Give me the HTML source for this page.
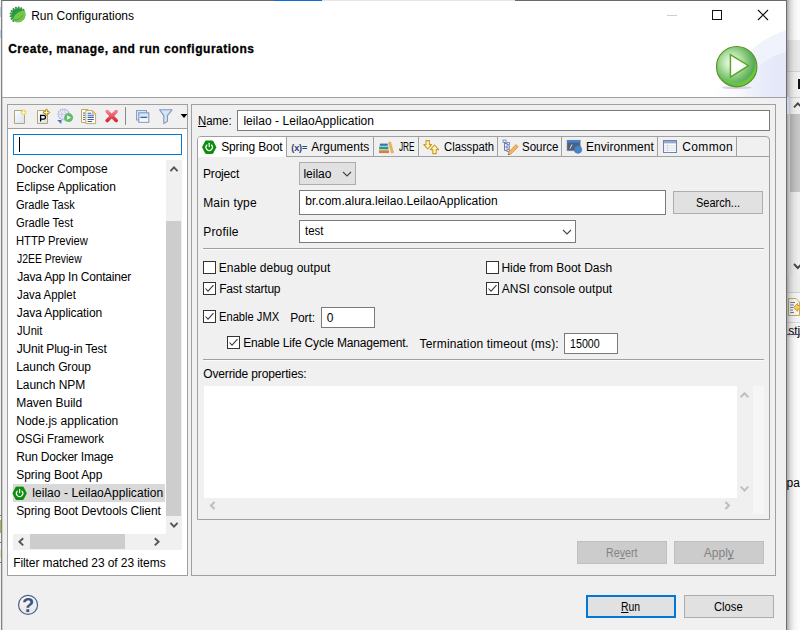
<!DOCTYPE html>
<html><head><meta charset="utf-8"><title>Run Configurations</title>
<style>
html,body{margin:0;padding:0}
body{width:800px;height:630px;overflow:hidden;position:relative;background:#f0f0f0;font-family:"Liberation Sans",sans-serif;font-size:12px;color:#000}
.a{position:absolute;box-sizing:border-box}
.t{position:absolute;white-space:nowrap;line-height:16px;height:16px;font-size:12px;transform-origin:0 0}
.t u{text-decoration:underline;text-underline-offset:1px;text-decoration-skip-ink:none}
.box{position:absolute;box-sizing:border-box;background:#fff;border:1px solid #7a7a7a}
.btn{position:absolute;box-sizing:border-box;background:#e1e1e1;border:1px solid #adadad}
.cb{position:absolute;box-sizing:border-box;width:13px;height:13px;background:#fff;border:1px solid #333}
svg{position:absolute;overflow:visible}
</style></head><body>
<!-- header white -->
<div class="a" id="hdr" style="left:2px;top:1px;width:785px;height:96px;background:#fff"></div>
<svg id="banner" style="left:0;top:0" width="800" height="98" viewBox="0 0 800 98"><defs>
<linearGradient id="gb1" gradientUnits="userSpaceOnUse" x1="712" y1="0" x2="764" y2="0"><stop offset="0" stop-color="#f0f2fc" stop-opacity="0"/><stop offset="1" stop-color="#f0f2fc"/></linearGradient>
<linearGradient id="gb2" gradientUnits="userSpaceOnUse" x1="738" y1="0" x2="776" y2="0"><stop offset="0" stop-color="#e4e8f9" stop-opacity="0"/><stop offset="1" stop-color="#e4e8f9"/></linearGradient>
</defs>
<path d="M787 30 C 762 37, 734 60, 712 97 L787 97 Z" fill="url(#gb1)"/>
<path d="M787 52 C 766 56, 748 72, 738 97 L787 97 Z" fill="url(#gb2)"/></svg>
<!-- window frame -->
<div class="a" style="left:1px;top:0;width:786px;height:1px;background:#6a6a6a"></div><div class="a" style="left:274px;top:0;width:48px;height:1px;background:#0b6dd8"></div><div class="a" style="left:322px;top:0;width:193px;height:1px;background:#e6e6e6"></div>
<div class="a" style="left:1px;top:0;width:1px;height:630px;background:#838383"></div><div class="a" style="left:2px;top:1px;width:1px;height:629px;background:rgba(90,90,90,0.22)"></div>
<div class="a" style="left:786px;top:0;width:1px;height:630px;background:#6e6e6e"></div>
<div class="a" style="left:2px;top:97px;width:784px;height:1px;background:#a0a0a0"></div>
<div class="a" style="left:0;top:7px;width:1px;height:10px;background:#b4d0ea"></div><div class="a" style="left:0;top:30px;width:1px;height:8px;background:#b4d0ea"></div><div class="a" style="left:0;top:520px;width:1px;height:13px;background:#a3ba45"></div><div class="a" style="left:0;top:550px;width:1px;height:8px;background:#e6dfa6"></div><div class="a" style="left:0;top:515px;width:1px;height:1px;background:#777"></div><div class="a" style="left:0;top:542px;width:1px;height:1px;background:#777"></div><div class="a" style="left:0;top:562px;width:1px;height:1px;background:#777"></div>
<!-- right background strip -->
<div class="a" id="rstrip" style="left:787px;top:0;width:13px;height:630px;background:#f0f0f0"></div>
<div class="a" style="left:787px;top:0;width:13px;height:40px;background:#fbfbfb"></div>
<div class="a" style="left:787px;top:40px;width:13px;height:31px;background:#e9e9e9"></div>
<div class="a" style="left:787px;top:71px;width:13px;height:1px;background:#d2d2d2"></div>
<div class="a" style="left:787px;top:72px;width:13px;height:25px;background:#f0f0f0"></div>
<div class="a" style="left:787px;top:97px;width:13px;height:1px;background:#d0d0d0"></div>
<div class="a" style="left:790px;top:98px;width:10px;height:178px;background:linear-gradient(90deg,#e6e6e6,#f0f0f0)"></div>
<div class="a" style="left:790px;top:98px;width:10px;height:16px;background:#f0f0f0"></div>
<div class="a" style="left:790px;top:114px;width:10px;height:78px;background:linear-gradient(90deg,#b9b9b9,#c8c8c8)"></div>
<svg style="left:793px;top:101px" width="7" height="8" viewBox="0 0 7 8"><path d="M1 6.4 L4.8 2.4 L8.6 6.4" fill="none" stroke="#444" stroke-width="1.9"/></svg>
<svg style="left:793px;top:262px" width="7" height="8" viewBox="0 0 7 8"><path d="M1 2 L4.8 6 L8.6 2" fill="none" stroke="#444" stroke-width="1.9"/></svg>
<div class="a" style="left:787px;top:276px;width:13px;height:16px;background:#ececec"></div>
<div class="a" style="left:787px;top:292px;width:13px;height:1px;background:#d0d0d0"></div>
<div class="a" style="left:787px;top:293px;width:13px;height:29px;background:#f5f5f5"></div>
<div class="a" style="left:787px;top:322px;width:13px;height:1px;background:#dadada"></div>
<div class="a" style="left:787px;top:323px;width:13px;height:11px;background:#f7f7f7"></div>
<div class="a" style="left:798px;top:79px;width:2px;height:10px;background:#111"></div>
<svg style="left:788px;top:298px" width="12" height="18" viewBox="0 0 12 18"><path d="M0.5 0.5 H8 L11.5 4 V17.5 H0.5 Z" fill="#fbf8ee" stroke="#c2a866" stroke-width="1"/><path d="M2.2 4.5 H7 M2.2 7 H6 M2.2 9.5 H5 M2.2 12 H5 M2.2 14.5 H6" stroke="#5c79b8" stroke-width="1"/><path d="M12 7.5 H9.6 V5.4 L5.6 9.4 L9.6 13.4 V11.2 H12 Z" fill="#f6cf62" stroke="#c9972a" stroke-width="0.9"/></svg>
<div class="a" style="left:787px;top:337px;width:13px;height:293px;background:#fcfcfc"></div>
<div class="a" style="left:787px;top:0;width:11px;height:630px;background:linear-gradient(90deg,rgba(60,60,60,0.42),rgba(80,80,80,0.2) 30%,rgba(100,100,100,0.08) 60%,rgba(120,120,120,0))"></div>
<div class="a" style="left:787px;top:97px;width:2px;height:17px;background:#c3d2ee"></div>
<span class="t" style="left:788.2px;top:322.5px">stj</span>
<div class="a" style="left:787px;top:334px;width:13px;height:1px;background:#4a4a6a"></div>
<span class="t" style="left:786.5px;top:475px">pa</span>
<svg style="left:10.3px;top:6.9px" width="16" height="16" viewBox="0 0 16 16"><circle cx="3.38" cy="13.91" r="1.05" fill="#2a9243"/><circle cx="1.57" cy="11.86" r="1.05" fill="#2a9243"/><circle cx="0.61" cy="9.30" r="1.05" fill="#2a9243"/><circle cx="0.64" cy="6.57" r="1.05" fill="#2a9243"/><circle cx="1.64" cy="4.03" r="1.05" fill="#2a9243"/><circle cx="3.49" cy="2.01" r="1.05" fill="#2a9243"/><circle cx="5.93" cy="0.79" r="1.05" fill="#2a9243"/><circle cx="8.65" cy="0.53" r="1.05" fill="#2a9243"/><circle cx="11.29" cy="1.26" r="1.05" fill="#2a9243"/><circle cx="13.49" cy="2.89" r="1.05" fill="#2a9243"/><circle cx="8.1" cy="8.1" r="7.1" fill="#2c9642"/><path d="M14.4 3.3 C17 7.2, 15.8 13, 10.4 15 C7.2 16.2, 4.2 15, 3 12.6 C3.4 8.2, 8 4.4, 14.4 3.3 Z" fill="#74c548"/><path d="M3.4 12.7 C6.6 13.6, 10.6 11.6, 12.4 8.4" fill="none" stroke="#3a9e44" stroke-width="0.9"/></svg>
<div class="a" style="left:667px;top:15px;width:10px;height:1px;background:#cfcfcf"></div>
<div class="a" style="left:712px;top:10px;width:10px;height:10px;border:1px solid #111"></div>
<svg style="left:758px;top:10px" width="10" height="10" viewBox="0 0 10 10"><path d="M0 0 L10 10 M10 0 L0 10" stroke="#111" stroke-width="1.15"/></svg>
<svg style="left:714px;top:44px" width="46" height="48" viewBox="0 0 46 48"><ellipse cx="22.7" cy="43.6" rx="15" ry="1.6" fill="#c9c4d6" opacity="0.7"/><circle cx="22.7" cy="22.7" r="20.2" fill="url(#grun)" stroke="#5d8f24" stroke-width="1.1"/><path d="M22.7 41.5 A18.8 18.8 0 0 0 41.5 22.7 A22 22 0 0 1 22.7 38.5 A22 22 0 0 1 6 30 A18.8 18.8 0 0 0 22.7 41.5 Z" fill="#6ccb3c" opacity="0.75"/><path d="M16.4 10.6 L34.4 21.7 L16.4 33.2 Z" fill="#fdfffb" stroke="#58a72c" stroke-width="1.5" stroke-linejoin="miter"/></svg>
<!-- left panel -->
<div class="a" id="lp" style="left:7px;top:104px;width:181px;height:472px;border:1px solid #a0a0a0"></div>
<div class="a" style="left:8px;top:128px;width:179px;height:1px;background:#a0a0a0"></div>
<div class="a" id="lpw" style="left:8px;top:129px;width:179px;height:446px;background:#fff"></div>
<svg width="0" height="0" style="left:0;top:0"><defs>
<linearGradient id="gpage" x1="0" y1="0" x2="1" y2="1"><stop offset="0" stop-color="#ffffff"/><stop offset="1" stop-color="#d3e1f5"/></linearGradient>
<linearGradient id="gred" x1="0" y1="0" x2="0" y2="1"><stop offset="0" stop-color="#f4808a"/><stop offset="1" stop-color="#d42b3a"/></linearGradient>
<linearGradient id="gwin" x1="0" y1="0" x2="0" y2="1"><stop offset="0" stop-color="#c5e2f8"/><stop offset="1" stop-color="#ffffff"/></linearGradient>
<radialGradient id="grun" cx="0.38" cy="0.40" r="0.66"><stop offset="0" stop-color="#fbfef9"/><stop offset="0.3" stop-color="#c2e8b6"/><stop offset="0.62" stop-color="#7cc470"/><stop offset="0.84" stop-color="#57a85a"/><stop offset="0.93" stop-color="#6cc83e"/><stop offset="1" stop-color="#64b830"/></radialGradient>
<linearGradient id="gsts" x1="0.2" y1="0" x2="0.8" y2="1"><stop offset="0" stop-color="#2f9a3a"/><stop offset="1" stop-color="#5fbf3f"/></linearGradient>
</defs></svg>
<svg style="left:13px;top:108px" width="16" height="17" viewBox="0 0 16 17"><path d="M1.5 2.5 H9 V5 H11.5 V15.5 H1.5 Z" fill="url(#gpage)" stroke="#b5a46e" stroke-width="1"/><path d="M10.6 1.6 V7.2 M7.8 4.4 H13.4" stroke="#efd266" stroke-width="2.6"/><path d="M10.6 2.4 V6.4 M8.6 4.4 H12.6" stroke="#fffbe0" stroke-width="0.9"/></svg>
<svg style="left:36px;top:108px" width="16" height="17" viewBox="0 0 16 17"><path d="M1.5 2.5 H8 V5 H11.5 V15.5 H1.5 Z" fill="url(#gpage)" stroke="#b5a46e" stroke-width="1"/><path d="M4.6 13.6 V7.4 H7.6 A1.9 1.9 0 0 1 7.6 11.2 H4.6" fill="none" stroke="#000" stroke-width="1.25"/><path d="M10.4 0.6 L14.2 4.4 L10.4 8.2 L6.6 4.4 Z" fill="#b98a1c"/><path d="M10.4 2 V6.8 M8 4.4 H12.8" stroke="#fff3c0" stroke-width="1"/></svg>
<svg style="left:56px;top:108px" width="18" height="17" viewBox="0 0 18 17"><circle cx="7.6" cy="6.4" r="5.4" fill="#e7eaf6" stroke="#9dabd6" stroke-width="1.2" stroke-dasharray="1.5 0.8"/><path d="M3 6.4 H12.2 M7.6 1.4 C5 4 5 9 7.6 11.4 M7.6 1.4 C10.2 4 10.2 9 7.6 11.4" fill="none" stroke="#c9b6e0" stroke-width="0.7"/><path d="M1.2 12 L5.6 12 L5.2 16 Z" fill="#4a72b4"/><circle cx="12.6" cy="9.6" r="4.5" fill="#62bd6a"/><path d="M11.2 7.4 L15 9.6 L11.2 11.8 Z" fill="#fff"/></svg>
<svg style="left:80px;top:108px" width="17" height="17" viewBox="0 0 17 17"><path d="M1.5 1.5 H8 L10.5 4 V14.5 H1.5 Z" fill="#fdfdf8" stroke="#c2aa62" stroke-width="1"/><path d="M3 5 H5 M3 7.2 H5 M3 9.4 H5 M3 11.6 H5" stroke="#4a66a8" stroke-width="1"/><path d="M5.8 2.6 H12.6 L15.6 5.6 V15.6 H5.8 Z" fill="#fbfcff" stroke="#c2aa62" stroke-width="1"/><path d="M12.4 2.8 V5.8 H15.4" fill="#e8d08a" stroke="#c2aa62" stroke-width="0.8"/><path d="M7.6 5.2 H11 M7.6 7.3 H13.8 M7.6 9.4 H13.8 M7.6 11.5 H13.8 M7.6 13.5 H12" stroke="#3f5ea6" stroke-width="1.1"/></svg>
<svg style="left:104px;top:108px" width="16" height="16" viewBox="0 0 16 16"><path d="M3.2 3.6 L12.2 12.6 M12.2 3.6 L3.2 12.6" stroke="url(#gred)" stroke-width="3.6" stroke-linecap="round"/></svg>
<div class="a" style="left:125px;top:107px;width:1px;height:18px;background:#8a8a8a"></div>
<svg style="left:135px;top:108px" width="16" height="16" viewBox="0 0 16 16"><rect x="1.5" y="2.5" width="10" height="9.5" fill="#d4e8f8" stroke="#8c9cc0" stroke-width="1"/><rect x="3.8" y="4.8" width="10" height="9.5" fill="url(#gwin)" stroke="#8290b4" stroke-width="1"/><path d="M5.4 9.3 H12.2" stroke="#1f4f8f" stroke-width="1.1"/></svg>
<svg style="left:158px;top:108px" width="16" height="17" viewBox="0 0 16 17"><path d="M1.6 1.8 H14 L9.4 7.6 V13.4 L5.8 15.6 V7.6 Z" fill="#d2e6f6" stroke="#8694bc" stroke-width="1.1" stroke-linejoin="round"/></svg>
<svg style="left:180px;top:113px" width="7" height="6" viewBox="0 0 7 6"><path d="M0.6 1 H7.4 L4 5 Z" fill="#000"/></svg>
<div class="a" id="filt" style="left:13px;top:134px;width:169px;height:21px;background:#fff;border:1px solid #0078d7"></div>
<div class="a" style="left:19px;top:137px;width:1px;height:15px;background:#000"></div>
<!-- list selection -->
<div class="a" id="sel" style="left:13px;top:484px;width:152px;height:18px;background:#d9d9d9"></div>
<div class="a" id="vsb" style="left:166px;top:160px;width:16px;height:374px;background:#f0f0f0"></div>
<div class="a" id="vthumb" style="left:166px;top:221px;width:15px;height:295px;background:#cdcdcd"></div>
<svg style="left:169px;top:165px" width="10" height="8" viewBox="0 0 10 8"><path d="M1.4 6.2 L5 2.4 L8.6 6.2" fill="none" stroke="#555" stroke-width="1.9"/></svg>
<svg style="left:169px;top:521px" width="10" height="8" viewBox="0 0 10 8"><path d="M1.4 1.8 L5 5.6 L8.6 1.8" fill="none" stroke="#555" stroke-width="1.9"/></svg>
<svg style="left:0;top:0" width="800" height="630" viewBox="0 0 800 630"><polygon points="12.9,493.3 16.1,487.1 23.1,487.1 26.3,493.3 23.1,499.5 16.1,499.5" fill="#0a8f0a" stroke="#0a8f0a" stroke-width="1" stroke-linejoin="round"/><path d="M17.3 491.1 A3.2 3.2 0 1 0 21.9 491.1" fill="none" stroke="#fff" stroke-width="1.15" stroke-linecap="round"/><path d="M19.6 489.3 L19.6 492.8" stroke="#fff" stroke-width="1.15" stroke-linecap="round"/></svg>
<div class="a" id="hsb" style="left:13px;top:534px;width:169px;height:16px;background:#f0f0f0"></div>
<div class="a" id="hthumb" style="left:30px;top:534px;width:95px;height:15px;background:#cdcdcd"></div>
<svg style="left:17px;top:537px" width="8" height="10" viewBox="0 0 8 10"><path d="M6.2 1.2 L2.4 4.8 L6.2 8.4" fill="none" stroke="#555" stroke-width="1.9"/></svg>
<svg style="left:153px;top:537px" width="8" height="10" viewBox="0 0 8 10"><path d="M1.8 1.2 L5.6 4.8 L1.8 8.4" fill="none" stroke="#555" stroke-width="1.9"/></svg>
<!-- right panel -->
<div class="a" id="rp" style="left:191px;top:104px;width:585px;height:472px;border:1px solid #a0a0a0"></div>
<div class="box" id="name" style="left:237px;top:110px;width:533px;height:21px"></div>
<div class="a" id="tf" style="left:197px;top:136px;width:573px;height:384px;border:1px solid #a0a0a0;border-radius:4px 4px 0 0"></div>
<div class="a" style="left:286px;top:156px;width:483px;height:1px;background:#a0a0a0"></div>
<div class="a" id="seltab" style="left:198px;top:137px;width:88px;height:20px;background:#fff;border-radius:3px 0 0 0"></div>
<div class="a" style="left:286px;top:137px;width:1px;height:20px;background:#a0a0a0"></div>
<div class="a" style="left:373px;top:137px;width:1px;height:20px;background:#a0a0a0"></div>
<div class="a" style="left:418px;top:137px;width:1px;height:20px;background:#a0a0a0"></div>
<div class="a" style="left:497px;top:137px;width:1px;height:20px;background:#a0a0a0"></div>
<div class="a" style="left:561px;top:137px;width:1px;height:20px;background:#a0a0a0"></div>
<div class="a" style="left:657px;top:137px;width:1px;height:20px;background:#a0a0a0"></div>
<div class="a" style="left:736px;top:137px;width:1px;height:20px;background:#a0a0a0"></div><svg style="left:0;top:0" width="800" height="630" viewBox="0 0 800 630"><polygon points="202.5,147.2 205.7,141.0 212.7,141.0 215.9,147.2 212.7,153.4 205.7,153.4" fill="#0a8f0a" stroke="#0a8f0a" stroke-width="1" stroke-linejoin="round"/><path d="M206.9 145.0 A3.2 3.2 0 1 0 211.5 145.0" fill="none" stroke="#fff" stroke-width="1.15" stroke-linecap="round"/><path d="M209.2 143.2 L209.2 146.7" stroke="#fff" stroke-width="1.15" stroke-linecap="round"/></svg>
<span class="t" style="left:291.3px;top:139.8px;font-size:9px;font-weight:bold;color:#2f4175;letter-spacing:-0.1px">(x)=</span>
<svg style="left:378px;top:140px" width="17" height="15" viewBox="0 0 17 15"><rect x="1.8" y="3.6" width="8" height="2.2" fill="#2f74c0"/><rect x="1.2" y="6.6" width="9.2" height="2.8" fill="#2f9d72"/><rect x="1" y="10.3" width="10" height="2.8" fill="#d17f45"/><path d="M10.4 2.4 L12.6 1.8 L15.6 12.6 L13.4 13.2 Z" fill="#f2b250" stroke="#e09a38" stroke-width="0.4"/></svg>
<svg style="left:423px;top:139px" width="17" height="16" viewBox="0 0 17 16"><path d="M3 1.6 H6.4 V5.6 H8.6 L4.7 10 L0.8 5.6 H3 Z" fill="#fff3c4" stroke="#c99d1e" stroke-width="1.1" stroke-linejoin="round"/><path d="M9.8 14.6 H13.2 V10.6 H15.6 L11.5 6 L7.4 10.6 H9.8 Z" fill="#fff3c4" stroke="#c99d1e" stroke-width="1.1" stroke-linejoin="round"/></svg>
<svg style="left:502px;top:139px" width="17" height="17" viewBox="0 0 17 17"><path d="M2.5 1.5 V11.5 H5 M2.5 4.5 H5 M2.5 8 H5" fill="none" stroke="#6a80b0" stroke-width="1"/><rect x="1" y="1" width="3" height="2.4" fill="#e8eef8" stroke="#6a80b0" stroke-width="0.8"/><rect x="5" y="3.4" width="2.6" height="2.2" fill="#e8eef8" stroke="#6a80b0" stroke-width="0.8"/><rect x="5" y="6.9" width="2.6" height="2.2" fill="#e8eef8" stroke="#6a80b0" stroke-width="0.8"/><rect x="5" y="10.4" width="2.6" height="2.2" fill="#e8eef8" stroke="#6a80b0" stroke-width="0.8"/><path d="M14 5.6 L16.2 7.8 L9 15 L6.2 15.8 L6.9 12.8 Z" fill="#f4b560" stroke="#d08a30" stroke-width="0.7"/><path d="M6.2 15.8 L6.6 14.2 L7.8 15.4 Z" fill="#5a4a3a"/></svg>
<svg style="left:566px;top:139px" width="17" height="15" viewBox="0 0 17 15"><rect x="1" y="1.2" width="13.2" height="10.6" fill="#4e5f80" stroke="#a09880" stroke-width="0.6"/><rect x="1" y="1.2" width="13.2" height="2.4" fill="#3f82d2"/><path d="M4 9.6 L6 5.4" stroke="#e8eef8" stroke-width="0.9"/><circle cx="12" cy="10.6" r="3.8" fill="#4585c8" stroke="#3a6cb0" stroke-width="0.5"/></svg>
<svg style="left:662px;top:139px" width="16" height="15" viewBox="0 0 16 15"><rect x="1.5" y="1.5" width="13" height="12" fill="#fdfdff" stroke="#6f83ad" stroke-width="1"/><rect x="2" y="2" width="12" height="2.4" fill="#9aa9c8"/><path d="M5.6 4.4 V13.4 M2 6.8 H14 M2 9.1 H14 M2 11.3 H14" stroke="#d0d6e4" stroke-width="0.8"/></svg>
<div class="btn" id="pcombo" style="left:299px;top:162px;width:57px;height:23px"></div>
<svg style="left:341.8px;top:171.2px" width="10" height="6" viewBox="-1 -1 10 6"><path d="M0 0 L4.0 4 L8 0" fill="none" stroke="#444" stroke-width="1.1"/></svg>
<div class="box" id="mt" style="left:299px;top:190px;width:367px;height:25px"></div>
<div class="btn" id="search" style="left:673px;top:191px;width:90px;height:23px"></div>
<div class="box" id="prof" style="left:299px;top:220px;width:277px;height:23px"></div>
<svg style="left:562.0px;top:228.5px" width="10" height="6" viewBox="-1 -1 10 6"><path d="M0 0 L4.0 4 L8 0" fill="none" stroke="#444" stroke-width="1.1"/></svg>
<div class="a" style="left:203px;top:248px;width:561px;height:1px;background:#a0a0a0"></div>
<div class="a" style="left:203px;top:249px;width:561px;height:1px;background:#fbfbfb"></div>
<div class="cb" style="left:203px;top:261px"></div>
<div class="cb" style="left:203px;top:282px"></div><svg style="left:203px;top:282px" width="13" height="13" viewBox="0 0 13 13"><path d="M2.5 6.5 L5 9.2 L10.5 3.2" fill="none" stroke="#3a3a3a" stroke-width="1.1"/></svg>
<div class="cb" style="left:486px;top:261px"></div>
<div class="cb" style="left:486px;top:282px"></div><svg style="left:486px;top:282px" width="13" height="13" viewBox="0 0 13 13"><path d="M2.5 6.5 L5 9.2 L10.5 3.2" fill="none" stroke="#3a3a3a" stroke-width="1.1"/></svg>
<div class="cb" style="left:203px;top:310px"></div><svg style="left:203px;top:310px" width="13" height="13" viewBox="0 0 13 13"><path d="M2.5 6.5 L5 9.2 L10.5 3.2" fill="none" stroke="#3a3a3a" stroke-width="1.1"/></svg>
<div class="box" id="port" style="left:321px;top:307px;width:54px;height:21px"></div>
<div class="cb" style="left:227px;top:336px"></div><svg style="left:227px;top:336px" width="13" height="13" viewBox="0 0 13 13"><path d="M2.5 6.5 L5 9.2 L10.5 3.2" fill="none" stroke="#3a3a3a" stroke-width="1.1"/></svg>
<div class="box" id="tmo" style="left:564px;top:333px;width:54px;height:21px"></div>
<div class="a" style="left:203px;top:359px;width:561px;height:1px;background:#a0a0a0"></div>
<div class="a" style="left:203px;top:360px;width:561px;height:1px;background:#fbfbfb"></div>
<div class="a" id="ta" style="left:204px;top:386px;width:533px;height:112px;background:#fff"></div>
<div class="a" id="tastrip" style="left:753px;top:386px;width:11px;height:128px;background:#f6f6f6"></div>
<svg style="left:740px;top:391px" width="9" height="7" viewBox="0 0 9 7"><path d="M0.7 6.2 L4.5 2.3 L8.3 6.2" fill="none" stroke="#bfbfbf" stroke-width="2"/></svg>
<svg style="left:740px;top:485px" width="9" height="7" viewBox="0 0 9 7"><path d="M0.7 1.6 L4.5 5.5 L8.3 1.6" fill="none" stroke="#bfbfbf" stroke-width="2"/></svg>
<svg style="left:209px;top:501px" width="7" height="9" viewBox="0 0 7 9"><path d="M5.6 1 L2 4.5 L5.6 8" fill="none" stroke="#bdbdbd" stroke-width="2"/></svg>
<svg style="left:724px;top:501px" width="7" height="9" viewBox="0 0 7 9"><path d="M1.4 1 L5 4.5 L1.4 8" fill="none" stroke="#bdbdbd" stroke-width="2"/></svg>
<div class="a" id="revert" style="left:577px;top:541px;width:90px;height:23px;background:#cccccc;border:1px solid #bfbfbf"></div>
<div class="a" id="apply" style="left:674px;top:541px;width:90px;height:23px;background:#cccccc;border:1px solid #bfbfbf"></div>
<div class="a" id="run" style="left:586px;top:595px;width:90px;height:23px;background:#e1e1e1;border:2px solid #0078d7"></div>
<div class="btn" id="close" style="left:684px;top:595px;width:90px;height:23px"></div>
<svg style="left:17px;top:594px" width="22" height="22" viewBox="0 0 22 22"><defs><linearGradient id="ghelp" x1="0" y1="0" x2="0" y2="1"><stop offset="0" stop-color="#fbfbfb"/><stop offset="1" stop-color="#e4e4e4"/></linearGradient></defs><circle cx="11.05" cy="10.9" r="9.5" fill="url(#ghelp)" stroke="#4d628d" stroke-width="1.2"/><text x="11" y="17.8" text-anchor="middle" font-family="Liberation Sans, sans-serif" font-weight="bold" font-size="20" fill="#3f5580">?</text></svg>
<span class="t" id="t0" style="left:31.19px;top:8.0px;letter-spacing:0.006px;">Run Configurations</span>
<span class="t" id="t1" style="left:8.19px;top:40.5px;letter-spacing:0.516px;font-weight:bold;-webkit-text-stroke:0.3px #000">Create, manage, and run configurations</span>
<span class="t" id="t2" style="left:16.19px;top:161.0px;letter-spacing:-0.092px;">Docker Compose</span>
<span class="t" id="t3" style="left:16.19px;top:179.0px;letter-spacing:-0.017px;">Eclipse Application</span>
<span class="t" id="t4" style="left:16.26px;top:197.0px;transform:scaleX(0.9222);">Gradle Task</span>
<span class="t" id="t5" style="left:16.25px;top:215.0px;transform:scaleX(0.9333);">Gradle Test</span>
<span class="t" id="t6" style="left:16.26px;top:233.0px;transform:scaleX(0.9316);">HTTP Preview</span>
<span class="t" id="t7" style="left:17.18px;top:251.0px;transform:scaleX(0.8653);">J2EE Preview</span>
<span class="t" id="t8" style="left:17.19px;top:269.0px;letter-spacing:-0.205px;">Java App In Container</span>
<span class="t" id="t9" style="left:17.19px;top:287.0px;transform:scaleX(0.9484);">Java Applet</span>
<span class="t" id="t10" style="left:16.75px;top:305.0px;letter-spacing:-0.087px;">Java Application</span>
<span class="t" id="t11" style="left:17.19px;top:323.0px;transform:scaleX(0.9296);">JUnit</span>
<span class="t" id="t12" style="left:16.79px;top:341.0px;letter-spacing:-0.188px;">JUnit Plug-in Test</span>
<span class="t" id="t13" style="left:16.19px;top:359.0px;letter-spacing:-0.109px;">Launch Group</span>
<span class="t" id="t14" style="left:16.19px;top:377.0px;letter-spacing:-0.033px;">Launch NPM</span>
<span class="t" id="t15" style="left:16.19px;top:395.0px;letter-spacing:-0.010px;">Maven Build</span>
<span class="t" id="t16" style="left:16.19px;top:413.0px;letter-spacing:0.039px;">Node.js application</span>
<span class="t" id="t17" style="left:16.24px;top:431.0px;transform:scaleX(0.9478);">OSGi Framework</span>
<span class="t" id="t18" style="left:16.19px;top:449.0px;letter-spacing:-0.187px;">Run Docker Image</span>
<span class="t" id="t19" style="left:16.19px;top:467.0px;letter-spacing:-0.036px;">Spring Boot App</span>
<span class="t" id="t20" style="left:32.19px;top:485.0px;letter-spacing:0.064px;">leilao - LeilaoApplication</span>
<span class="t" id="t21" style="left:16.19px;top:503.0px;letter-spacing:-0.081px;">Spring Boot Devtools Client</span>
<span class="t" id="t22" style="left:13.19px;top:554.5px;letter-spacing:-0.082px;">Filter matched 23 of 23 items</span>
<span class="t" id="t23" style="left:197.77px;top:112.5px;transform:scaleX(0.9514);"><u>N</u>ame:</span>
<span class="t" id="t24" style="left:243.39px;top:112.5px;letter-spacing:0.048px;">leilao - LeilaoApplication</span>
<span class="t" id="t25" style="left:221.19px;top:139.0px;letter-spacing:-0.140px;">Spring Boot</span>
<span class="t" id="t26" style="left:311.19px;top:139.0px;letter-spacing:0.012px;">Arguments</span>
<span class="t" id="t27" style="left:398.84px;top:139.0px;transform:scaleX(0.6864);">JRE</span>
<span class="t" id="t28" style="left:443.83px;top:139.0px;transform:scaleX(0.9385);">Classpath</span>
<span class="t" id="t29" style="left:522.42px;top:139.0px;transform:scaleX(0.9595);">Source</span>
<span class="t" id="t30" style="left:586.00px;top:139.0px;letter-spacing:0.040px;">Environment</span>
<span class="t" id="t31" style="left:682.19px;top:139.0px;letter-spacing:0.380px;">Common</span>
<span class="t" id="t32" style="left:203.00px;top:166.0px;letter-spacing:-0.183px;">Project</span>
<span class="t" id="t33" style="left:303.39px;top:166.0px;letter-spacing:-0.000px;">leilao</span>
<span class="t" id="t34" style="left:203.19px;top:194.5px;letter-spacing:0.175px;">Main type</span>
<span class="t" id="t35" style="left:305.19px;top:192.5px;letter-spacing:0.031px;">br.com.alura.leilao.LeilaoApplication</span>
<span class="t" id="t36" style="left:696.23px;top:194.5px;transform:scaleX(0.9170);">Search...</span>
<span class="t" id="t37" style="left:203.19px;top:223.5px;letter-spacing:0.217px;">Profile</span>
<span class="t" id="t38" style="left:305.43px;top:222.5px;transform:scaleX(0.9526);">test</span>
<span class="t" id="t39" style="left:218.75px;top:260.0px;letter-spacing:0.039px;">Enable debug output</span>
<span class="t" id="t40" style="left:219.19px;top:280.5px;letter-spacing:-0.182px;">Fast startup</span>
<span class="t" id="t41" style="left:501.39px;top:260.0px;letter-spacing:-0.039px;">Hide from Boot Dash</span>
<span class="t" id="t42" style="left:501.79px;top:280.5px;letter-spacing:0.056px;">ANSI console output</span>
<span class="t" id="t43" style="left:219.22px;top:309.0px;transform:scaleX(0.9297);">Enable JMX</span>
<span class="t" id="t44" style="left:290.19px;top:309.5px;letter-spacing:-0.125px;">Port:</span>
<span class="t" id="t45" style="left:326.67px;top:309.5px;">0</span>
<span class="t" id="t46" style="left:243.19px;top:335.0px;letter-spacing:-0.164px;">Enable Life Cycle Management.</span>
<span class="t" id="t47" style="left:419.60px;top:335.5px;letter-spacing:0.154px;">Termination timeout (ms):</span>
<span class="t" id="t48" style="left:570.48px;top:335.5px;transform:scaleX(0.8906);">15000</span>
<span class="t" id="t49" style="left:203.19px;top:365.5px;letter-spacing:-0.137px;">Override properties:</span>
<span class="t" id="t50" style="left:606.24px;top:544.5px;transform:scaleX(0.8886);color:#838383">Re<u>v</u>ert</span>
<span class="t" id="t51" style="left:703.71px;top:544.5px;letter-spacing:0.025px;color:#838383">Appl<u>y</u></span>
<span class="t" id="t52" style="left:621.18px;top:598.5px;transform:scaleX(0.8682);"><u>R</u>un</span>
<span class="t" id="t53" style="left:714.22px;top:598.5px;transform:scaleX(0.9367);">Close</span>
</body></html>
